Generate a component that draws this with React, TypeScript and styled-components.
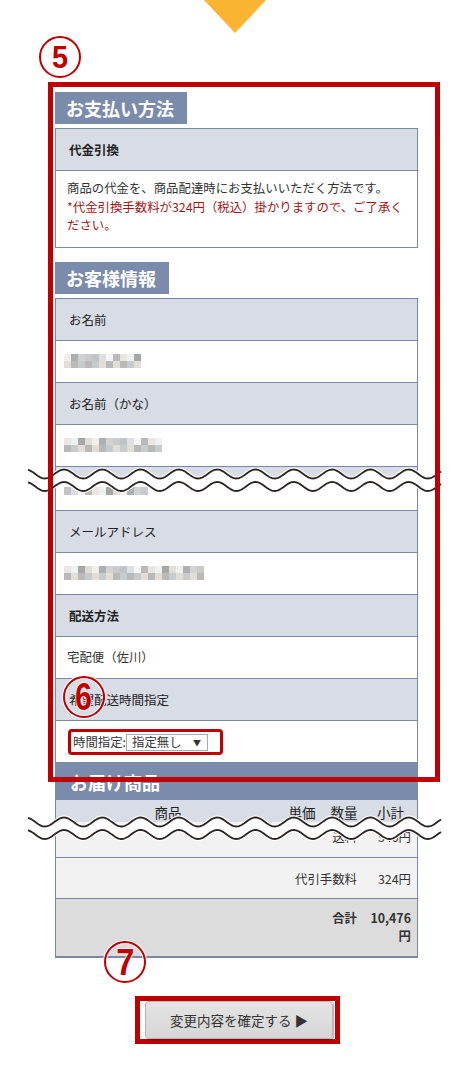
import styled, { createGlobalStyle } from "styled-components";

const GlobalStyle = createGlobalStyle`
  html, body {
    margin: 0;
    padding: 0;
    background: #fff;
  }
  body {
    font-family: "Noto Sans CJK JP", "Noto Sans", sans-serif;
    color: #333;
  }
`;

const COLOR = {
  title: "#7b8bab",
  head: "#d8dce4",
  line: "#7a89a3",
  red: "#c00000",
  note: "#a31515",
  row: "#f2f2f2",
  total: "#dcdcdc",
  arrow: "#fbb431",
};

const Page = styled.div`
  position: relative;
  width: 468px;
  height: 1070px;
  overflow: hidden;
  background: #fff;
`;

const Arrow = styled.div`
  width: 0;
  height: 0;
  margin-left: 204px;
  border-left: 31px solid transparent;
  border-right: 31px solid transparent;
  border-top: 33px solid ${COLOR.arrow};
`;

// 注釈の丸数字
const StepMark = styled.div<{ $size: number; $scale?: number }>`
  width: 42px;
  height: 42px;
  box-sizing: border-box;
  border: 2px solid ${COLOR.red};
  border-radius: 50%;
  box-shadow: 0 0 0 1px #fff, inset 0 0 0 1px rgba(255, 255, 255, 0.8);
  display: flex;
  align-items: center;
  justify-content: center;
  color: ${COLOR.red};
  font-family: "Liberation Sans", Arial, sans-serif;
  font-weight: bold;
  font-size: ${(p) => p.$size}px;
  line-height: 1;
  text-shadow: 0 0 2px #fff, 0 0 2px #fff, 0 0 1px #fff;

  span {
    display: inline-block;
    transform: scaleX(${(p) => p.$scale ?? 0.85});
  }
`;

const TopMark = styled(StepMark)`
  margin: 3px 0 0 39px;
`;

const FloatMark = styled(StepMark)<{ $x: number; $y: number }>`
  position: absolute;
  left: ${(p) => p.$x}px;
  top: ${(p) => p.$y}px;
  z-index: 4;
`;

const Frame = styled.div`
  position: absolute;
  left: 48px;
  top: 82px;
  width: 392px;
  height: 700px;
  box-sizing: border-box;
  border: 5px solid ${COLOR.red};
  z-index: 3;
  pointer-events: none;
`;

const Content = styled.div`
  width: 363px;
  margin: 14px 0 0 55px;
`;

const SectionTitle = styled.div<{ $gap?: boolean }>`
  width: fit-content;
  height: 32px;
  line-height: 32px;
  padding: 0 13px 0 11px;
  margin-top: ${(p) => (p.$gap ? 14 : 0)}px;
  margin-bottom: 4px;
  background: ${COLOR.title};
  color: #fff;
  font-size: 18px;
  font-weight: bold;
`;

const Box = styled.div`
  box-sizing: border-box;
  border: 1px solid ${COLOR.line};
`;

const HeadCell = styled.div<{ $bold?: boolean }>`
  position: relative;
  height: 41px;
  display: flex;
  align-items: center;
  padding-left: 13px;
  background: ${COLOR.head};
  border-bottom: 1px solid ${COLOR.line};
  font-size: 12.5px;
  font-weight: ${(p) => (p.$bold ? 700 : 400)};
  color: #222;
`;

const ValueCell = styled.div<{ $last?: boolean }>`
  position: relative;
  height: 41px;
  display: flex;
  align-items: center;
  padding-left: 8px;
  background: #fff;
  border-bottom: ${(p) => (p.$last ? "none" : `1px solid ${COLOR.line}`)};
  font-size: 12.4px;
`;

const TextValue = styled.span`
  padding-left: 3px;
`;

const PayBody = styled.div`
  padding: 8px 6px 12px 11px;
  font-size: 12.4px;
  line-height: 18.5px;
`;

const Note = styled.span`
  color: ${COLOR.note};
`;

const Mosaic = styled.div<{ $cols: number; $tile: number }>`
  display: grid;
  grid-template-columns: repeat(${(p) => p.$cols}, 7px);
  grid-auto-rows: ${(p) => p.$tile}px;
`;

const Tile = styled.div<{ $c: string }>`
  background: ${(p) => p.$c};
`;

const PALETTE = [
  "#e9e6e1",
  "#c8cbcc",
  "#a4a8a7",
  "#dcdfe3",
  "#f1efec",
  "#b9b9b9",
  "#d2d2d2",
  "#eef1f4",
  "#c1c4c6",
  "#e2ddd5",
  "#f6f6f6",
  "#adb0b2",
];

const Blurred: React.FC<{ cols: number; rows?: number; seed: number; tile?: number }> = ({
  cols,
  rows = 2,
  seed,
  tile = 7,
}) => {
  const tiles = [];
  for (let r = 0; r < rows; r++) {
    for (let c = 0; c < cols; c++) {
      const i = (c * 7 + r * 5 + seed * 3 + ((c * r + seed) % 4)) % PALETTE.length;
      tiles.push(<Tile key={`${r}-${c}`} $c={PALETTE[i]} />);
    }
  }
  return (
    <Mosaic $cols={cols} $tile={tile}>
      {tiles}
    </Mosaic>
  );
};

// 途中省略の波線
const WaveSvg = styled.svg<{ $top: number }>`
  position: absolute;
  left: -28px;
  top: ${(p) => p.$top}px;
  z-index: 2;
  overflow: visible;
`;

const WAVE_W = 413;
const wavePts = (c: number) => {
  const pts: string[] = [];
  for (let x = 0; x <= WAVE_W; x += 1) {
    const y = c - 4.5 * Math.cos((2 * Math.PI * (x - 36)) / 38.3);
    pts.push(`${x},${y.toFixed(2)}`);
  }
  return pts;
};

const WaveCut: React.FC<{ top: number }> = ({ top }) => {
  const a = wavePts(8);
  const b = wavePts(20.5);
  const band = `M${a.join(" L")} L${[...b].reverse().join(" L")} Z`;
  const la = `M${a.join(" L")}`;
  const lb = `M${b.join(" L")}`;
  return (
    <WaveSvg $top={top} width={WAVE_W} height={30} viewBox={`0 0 ${WAVE_W} 30`}>
      <path d={band} fill="#fff" />
      <path d={la} fill="none" stroke="#fff" strokeWidth={4} />
      <path d={lb} fill="none" stroke="#fff" strokeWidth={4} />
      <path d={la} fill="none" stroke="#2b2222" strokeWidth={1.8} />
      <path d={lb} fill="none" stroke="#2b2222" strokeWidth={1.8} />
    </WaveSvg>
  );
};

const CutRow = styled.div`
  position: relative;
  height: 43px;
  border-bottom: 1px solid ${COLOR.line};
  display: flex;
  flex-direction: column;
`;

const CutTop = styled.div`
  height: 12px;
  background: ${COLOR.head};
`;

const CutBottom = styled.div`
  flex: 1;
  background: #fff;
  padding: 8px 0 0 8px;
`;

const TimeField = styled.div`
  display: inline-flex;
  align-items: center;
  margin: 2px 0 0 4px;
  padding: 1px 12px 1px 2px;
  border: 3px solid ${COLOR.red};
  border-radius: 4px;
  font-size: 12.4px;
  white-space: nowrap;
`;

const SelectBox = styled.div`
  position: relative;
  width: 82px;
  height: 17px;
  box-sizing: border-box;
  border: 1px solid #a9a9a9;
  padding-left: 5px;
  font-size: 12.4px;
  line-height: 15px;
  background: #fff;

  &::after {
    content: "▼";
    position: absolute;
    right: 6px;
    top: 0;
    font-size: 8px;
    color: #333;
  }
`;

const ItemsTitle = styled.div`
  height: 37px;
  padding-left: 15px;
  line-height: 38px;
  background: ${COLOR.title};
  color: #fff;
  font-size: 18px;
  font-weight: bold;
`;

const Items = styled.div`
  border: 1px solid ${COLOR.line};
  border-top: none;
  font-size: 12.4px;
`;

const Grid = styled.div`
  display: grid;
  grid-template-columns: 224px 44px 40px 53px;
`;

const ItemsHead = styled(Grid)`
  position: relative;
  height: 22px;
  background: ${COLOR.head};
  line-height: 18px;
  padding-top: 3px;
  box-sizing: border-box;
  text-align: center;
  font-size: 13.5px;
  color: #222;
`;

const ItemsRow = styled(Grid)<{ $bg: string; $h?: number; $pt?: number }>`
  min-height: ${(p) => p.$h ?? 41}px;
  box-sizing: border-box;
  padding-top: ${(p) => p.$pt ?? 12}px;
  background: ${(p) => p.$bg};
  border-bottom: 1px solid ${COLOR.line};
  line-height: 18px;
`;

const Label = styled.div<{ $bold?: boolean }>`
  grid-column: 1 / 4;
  text-align: right;
  padding-right: 7px;
  font-weight: ${(p) => (p.$bold ? 700 : 400)};
`;

const Amount = styled.div<{ $bold?: boolean }>`
  text-align: right;
  padding: 0 6px 0 4px;
  font-weight: ${(p) => (p.$bold ? 700 : 400)};
`;

const Actions = styled.div`
  display: flex;
  justify-content: center;
  margin-top: 38px;
`;

const ButtonFrame = styled.div`
  border: 5px solid ${COLOR.red};
  padding: 0 2px 0 5px;
  margin-left: 2px;
`;

const SubmitButton = styled.button`
  display: block;
  width: 188px;
  height: 38px;
  border: 1px solid #b4b4b4;
  border-radius: 4px;
  background: linear-gradient(#e4e4e4, #d6d6d6);
  box-shadow: 1px 1px 2px rgba(0, 0, 0, 0.35);
  font-family: "Noto Sans CJK JP", sans-serif;
  font-size: 13.5px;
  color: #333;
  cursor: pointer;
`;

export default function App() {
  return (
    <Page>
      <GlobalStyle />
      <Arrow />
      <TopMark $size={32} $scale={0.9}>
        <span>5</span>
      </TopMark>

      <Content>
        <SectionTitle>お支払い方法</SectionTitle>
        <Box>
          <HeadCell $bold>代金引換</HeadCell>
          <PayBody>
            商品の代金を、商品配達時にお支払いいただく方法です。
            <br />
            <Note>*代金引換手数料が324円（税込）掛かりますので、ご了承ください。</Note>
          </PayBody>
        </Box>

        <SectionTitle $gap>お客様情報</SectionTitle>
        <Box>
          <HeadCell>お名前</HeadCell>
          <ValueCell>
            <Blurred cols={11} seed={1} />
          </ValueCell>
          <HeadCell>お名前（かな）</HeadCell>
          <ValueCell>
            <Blurred cols={14} seed={4} />
          </ValueCell>
          <CutRow>
            <CutTop />
            <CutBottom>
              <Blurred cols={12} rows={1} seed={2} tile={8} />
            </CutBottom>
            <WaveCut top={-1} />
          </CutRow>
          <HeadCell>メールアドレス</HeadCell>
          <ValueCell>
            <Blurred cols={20} seed={7} />
          </ValueCell>
          <HeadCell $bold>配送方法</HeadCell>
          <ValueCell>
            <TextValue>宅配便（佐川）</TextValue>
          </ValueCell>
          <HeadCell>希望配送時間指定</HeadCell>
          <ValueCell $last>
            <TimeField>
              時間指定:<SelectBox>指定無し</SelectBox>
            </TimeField>
          </ValueCell>
        </Box>

        <ItemsTitle>お届け商品</ItemsTitle>
        <Items>
          <ItemsHead>
            <div>商品</div>
            <div>単価</div>
            <div>数量</div>
            <div>小計</div>
            <WaveCut top={14} />
          </ItemsHead>
          <ItemsRow $bg={COLOR.row} $h={36} $pt={6}>
            <Label>送料</Label>
            <Amount>540円</Amount>
          </ItemsRow>
          <ItemsRow $bg={COLOR.row}>
            <Label>代引手数料</Label>
            <Amount>324円</Amount>
          </ItemsRow>
          <ItemsRow $bg={COLOR.total} $h={58} $pt={10}>
            <Label $bold>合計</Label>
            <Amount $bold>10,476 円</Amount>
          </ItemsRow>
        </Items>

        <Actions>
          <ButtonFrame>
            <SubmitButton>変更内容を確定する ▶</SubmitButton>
          </ButtonFrame>
        </Actions>
      </Content>

      <Frame />
      <FloatMark $x={63} $y={676} $size={38} $scale={0.8}>
        <span>6</span>
      </FloatMark>
      <FloatMark $x={104} $y={941} $size={37} $scale={0.88}>
        <span>7</span>
      </FloatMark>
    </Page>
  );
}
